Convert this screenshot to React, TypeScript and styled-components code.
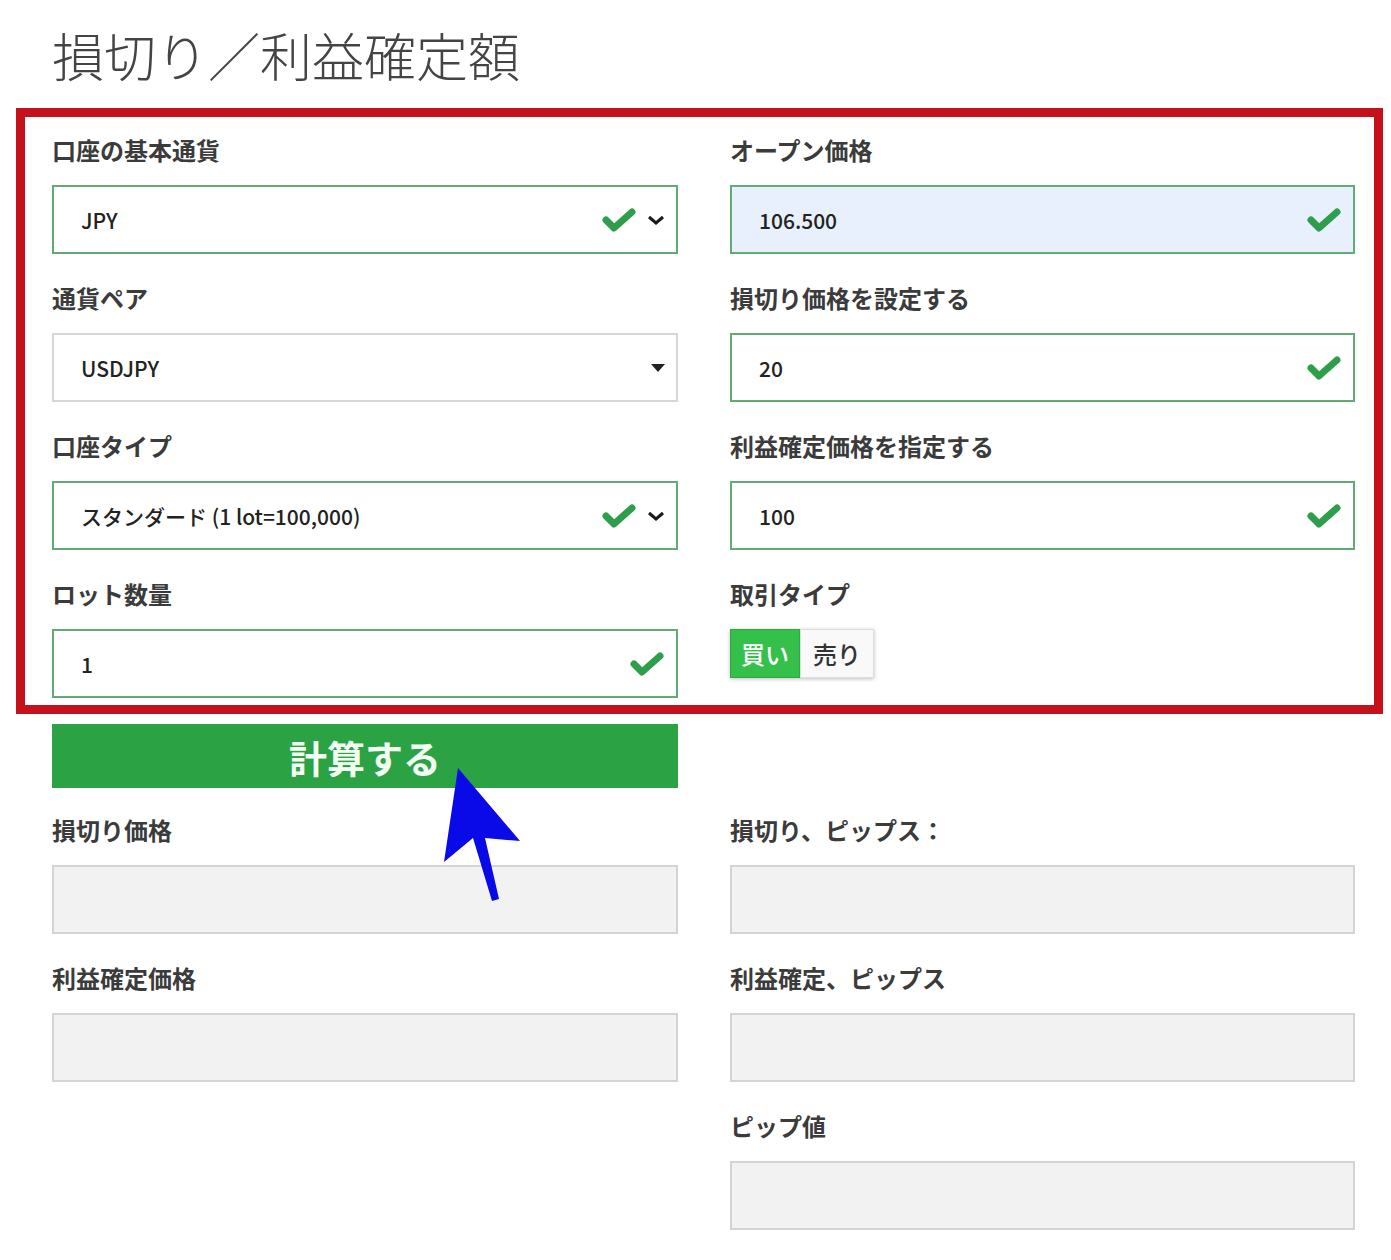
import { FC } from 'react';
import styled, { createGlobalStyle, css } from 'styled-components';

const GlobalStyle = createGlobalStyle`
  body {
    margin: 0;
    background: #ffffff;
    font-family: 'Noto Sans CJK JP', 'Noto Sans', sans-serif;
    color: #333333;
  }
`;

const StyledPage = styled.div`
  position: relative;
  width: 1391px;
  min-height: 1260px;
  padding-top: 24px;
  box-sizing: border-box;
`;
const StyledTitle = styled.h1`
  margin: 0 0 22px 52px;
  font-size: 52px;
  line-height: 62px;
  font-weight: 300;
  color: #444444;
  letter-spacing: 0;
`;
const StyledHighlight = styled.section`
  margin-left: 16px;
  width: 1367px;
  box-sizing: border-box;
  border: 9px solid #c4111b;
  padding: 18px 19px 7px 27px;
`;
const StyledGrid = styled.div`
  display: grid;
  grid-template-columns: 626px 625px;
  column-gap: 52px;
  row-gap: 29px;
`;
const StyledField = styled.div`
  display: flex;
  flex-direction: column;
`;
const StyledLabel = styled.label`
  font-size: 24px;
  line-height: 30px;
  font-weight: 700;
  color: #3b3b3b;
  margin-bottom: 20px;
  white-space: nowrap;
`;

type BoxState = 'valid' | 'plain' | 'output';

const StyledBox = styled.div<{ $state: BoxState; $tint?: boolean }>`
  display: flex;
  align-items: center;
  height: 69px;
  box-sizing: border-box;
  padding: 0 11px 0 27px;
  font-size: 21px;
  font-weight: 500;
  color: #222222;
  ${props =>
    props.$state === 'valid' &&
    css`
      border: 2px solid #62ab76;
      background: ${props.$tint ? '#e8f0fd' : '#ffffff'};
    `}
  ${props =>
    props.$state === 'plain' &&
    css`
      border: 2px solid #d6d6d6;
      background: #ffffff;
    `}
  ${props =>
    props.$state === 'output' &&
    css`
      border: 2px solid #d4d4d4;
      background: #f2f2f2;
    `}
`;
const StyledValue = styled.span`
  flex: 1;
  white-space: nowrap;
`;
const StyledIcons = styled.span`
  display: flex;
  align-items: center;
  gap: 10px;
`;
const StyledToggle = styled.div`
  display: inline-flex;
  align-self: flex-start;
  height: 49px;
  box-shadow: 0 1px 4px rgba(0, 0, 0, 0.25);
`;
const StyledToggleItem = styled.span<{ $active?: boolean }>`
  display: flex;
  align-items: center;
  justify-content: center;
  width: ${props => (props.$active ? '70px' : '74px')};
  font-size: 24px;
  font-weight: 500;
  color: ${props => (props.$active ? '#ffffff' : '#333333')};
  background: ${props => (props.$active ? '#35c04c' : '#f9f9f9')};
  border: 1px solid ${props => (props.$active ? '#2ea843' : '#dddddd')};
  box-sizing: border-box;
`;
const StyledButton = styled.button`
  display: block;
  margin: 10px 0 0 52px;
  width: 626px;
  height: 64px;
  border: none;
  background: #2ba243;
  color: #f4fff4;
  font-family: inherit;
  font-size: 38px;
  font-weight: 700;
  cursor: pointer;
  padding: 0;
`;
const StyledResults = styled(StyledGrid)`
  margin: 27px 0 0 52px;
`;
const StyledCursor = styled.svg`
  position: absolute;
  left: 440px;
  top: 764px;
`;

const Check: FC = () => (
  <svg width="36" height="28" viewBox="0 0 36 28">
    <polyline
      points="5,14 13,22 31,6"
      fill="none"
      stroke="#2e9e4a"
      strokeWidth="7"
      strokeLinecap="round"
      strokeLinejoin="round"
    />
  </svg>
);
const Chevron: FC = () => (
  <svg width="18" height="12" viewBox="0 0 18 12">
    <polyline points="2,3 9,9 16,3" fill="none" stroke="#1a1a1a" strokeWidth="3" />
  </svg>
);
const Caret: FC = () => (
  <svg width="14" height="8" viewBox="0 0 14 8">
    <polygon points="0,0 14,0 7,8" fill="#222222" />
  </svg>
);

type InputProps = {
  label: string;
  value?: string;
  state?: BoxState;
  tint?: boolean;
  select?: 'check' | 'caret';
};

const Input: FC<InputProps> = ({ label, value, state = 'valid', tint, select }) => (
  <StyledField>
    <StyledLabel>{label}</StyledLabel>
    <StyledBox $state={state} $tint={tint}>
      <StyledValue>{value}</StyledValue>
      <StyledIcons>
        {state === 'valid' && <Check />}
        {select === 'check' && <Chevron />}
        {select === 'caret' && <Caret />}
      </StyledIcons>
    </StyledBox>
  </StyledField>
);

const App: FC = () => (
  <>
    <GlobalStyle />
    <StyledPage>
      <StyledTitle>損切り／利益確定額</StyledTitle>
      <StyledHighlight>
        <StyledGrid>
          <Input label="口座の基本通貨" value="JPY" select="check" />
          <Input label="オープン価格" value="106.500" tint />
          <Input label="通貨ペア" value="USDJPY" state="plain" select="caret" />
          <Input label="損切り価格を設定する" value="20" />
          <Input label="口座タイプ" value="スタンダード (1 lot=100,000)" select="check" />
          <Input label="利益確定価格を指定する" value="100" />
          <Input label="ロット数量" value="1" />
          <StyledField>
            <StyledLabel>取引タイプ</StyledLabel>
            <StyledToggle>
              <StyledToggleItem $active>買い</StyledToggleItem>
              <StyledToggleItem>売り</StyledToggleItem>
            </StyledToggle>
          </StyledField>
        </StyledGrid>
      </StyledHighlight>
      <StyledButton>計算する</StyledButton>
      <StyledResults>
        <Input label="損切り価格" state="output" />
        <Input label="損切り、ピップス：" state="output" />
        <Input label="利益確定価格" state="output" />
        <Input label="利益確定、ピップス" state="output" />
        <div />
        <Input label="ピップ値" state="output" />
      </StyledResults>
      <StyledCursor width="85" height="142" viewBox="440 764 85 142">
        <polygon
          points="458,768 520,841 485,838 499,899 492,901 473,838 444,862"
          fill="#0a0ae8"
        />
      </StyledCursor>
    </StyledPage>
  </>
);

export default App;
